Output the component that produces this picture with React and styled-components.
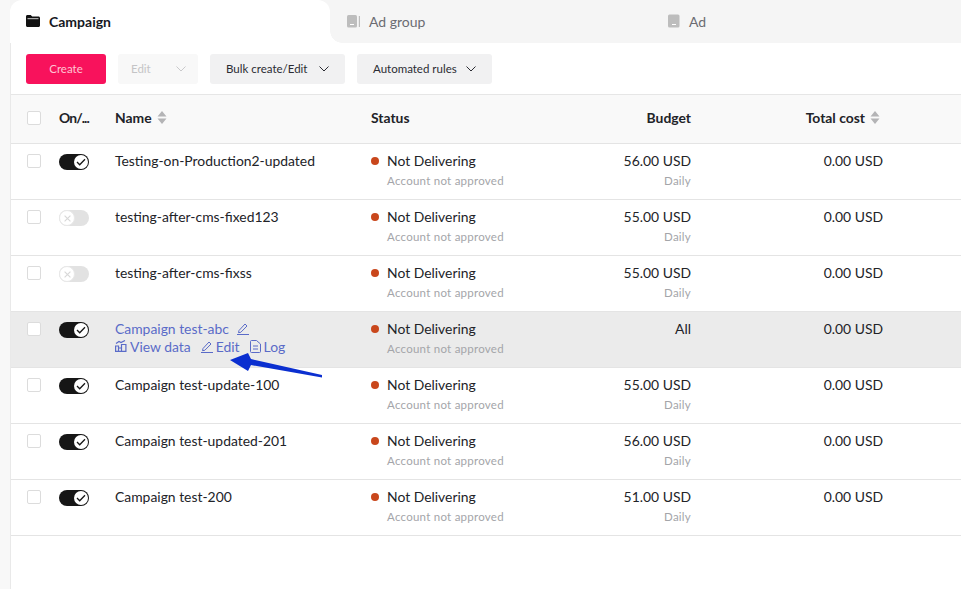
import React from 'react'
import styled, { createGlobalStyle } from 'styled-components'

const GlobalStyle = createGlobalStyle`
  html, body {
    margin: 0;
    padding: 0;
    background: #fff;
  }
  body {
    font-family: "Lato", "Liberation Sans", sans-serif;
    color: #222328;
    overflow: hidden;
  }
`

const Page = styled.div`
  position: relative;
  width: 961px;
  height: 589px;
  overflow: hidden;
  box-sizing: border-box;
  padding-left: 10px;
  background: #f8f8f8;
`
const Panel = styled.div`
  height: 100%;
  background: #fff;
  border-left: 1px solid #e9e9e9;
`
const Tabs = styled.div`
  display: flex;
  height: 43px;
  margin-left: -1px;
  background: #f5f5f5;
`
const Tab = styled.div`
  position: relative;
  display: flex;
  align-items: center;
  gap: 9px;
  box-sizing: border-box;
  width: ${props => props.width}px;
  padding: 0 0 1px ${props => props.pad}px;
  font-size: 14px;
  font-weight: ${props => props.active ? 700 : 400};
  color: ${props => props.active ? '#161823' : '#6b6c72'};
  background: ${props => props.active ? '#fff' : 'transparent'};
  border-radius: ${props => props.active ? '12px 12px 0 0' : '0'};
  ${props => props.active && `
    &::after {
      content: '';
      position: absolute;
      right: -12px;
      bottom: 0;
      width: 12px;
      height: 12px;
      background: radial-gradient(circle at 100% 0, transparent 11.5px, #fff 12px);
    }
  `}
`
const Toolbar = styled.div`
  display: flex;
  align-items: center;
  gap: 12px;
  height: 50px;
  padding: 1px 0 0 15px;
  border-bottom: 1px solid #e6e6e6;
`
const Button = styled.div`
  display: flex;
  align-items: center;
  justify-content: ${props => props.center ? 'center' : 'space-between'};
  box-sizing: border-box;
  width: ${props => props.width}px;
  height: 30px;
  padding: ${props => props.center ? '0 0 1px' : props.disabled ? '0 12px 1px 13px' : '0 16px 1px'};
  border-radius: 3px;
  font-size: 11.5px;
  background: ${props => props.primary ? '#f8125c' : props.disabled ? '#f8f8f8' : '#f1f1f2'};
  color: ${props => props.primary ? '#ffc4d3' : props.disabled ? '#c4c4c6' : '#2b2c33'};
`
const Row = styled.div`
  display: grid;
  grid-template-columns: 48px 56px 256px 190px 130px 192px 1fr;
  box-sizing: border-box;
  height: ${props => props.header ? '49px' : '56px'};
  border-bottom: 1px solid #e4e4e4;
  background: ${props => props.header ? '#f9f9f9' : props.hovered ? '#ebebeb' : '#fff'};
  font-size: 13.9px;
`
const Cell = styled.div`
  padding-top: ${props => props.header ? '14px' : '8px'};
  line-height: 17px;
  text-align: ${props => props.right ? 'right' : 'left'};
  font-weight: ${props => props.header ? 700 : 400};
  white-space: nowrap;
`
const Checkbox = styled.div`
  box-sizing: border-box;
  width: 14px;
  height: 14px;
  margin: 2px 0 0 16px;
  background: #fff;
  border: 1px solid #dcdcdc;
  border-radius: 2px;
`
const Track = styled.div`
  position: relative;
  width: 30px;
  height: 16px;
  margin-top: 2px;
  border-radius: 8px;
  background: ${props => props.on ? '#161616' : '#e2e2e2'};
`
const Knob = styled.div`
  position: absolute;
  top: ${props => props.on ? '1px' : '0'};
  left: ${props => props.on ? '15px' : '0'};
  display: flex;
  align-items: center;
  justify-content: center;
  width: ${props => props.on ? '14px' : '16px'};
  height: ${props => props.on ? '14px' : '16px'};
  border-radius: 50%;
  background: #fff;
  border: ${props => props.on ? 'none' : '1px solid #e8e8e8'};
  box-sizing: border-box;
`
const HeaderLabel = styled.span`
  display: inline-flex;
  align-items: center;
  gap: 5px;
  padding-right: ${props => props.inset || 0}px;
`
const ClippedLabel = styled.span`
  letter-spacing: -0.9px;
`
const StatusLine = styled.div`
  display: flex;
  align-items: center;
  gap: 8px;
`
const Dot = styled.span`
  width: 8px;
  height: 8px;
  border-radius: 50%;
  background: #c9471c;
`
const SubText = styled.div`
  margin: 3px 0 0 ${props => props.indent ? '16px' : '0'};
  font-size: 11.5px;
  line-height: 17px;
  color: #a4a5a9;
  letter-spacing: 0.25px;
`
const LinkLine = styled.div`
  display: flex;
  align-items: center;
  gap: ${props => props.gap || 4}px;
  color: #5a6bc8;
  height: 18px;
  &:first-child {
    margin-top: -1px;
  }
`
const LinkItem = styled.span`
  display: inline-flex;
  align-items: center;
  gap: 3px;
`
const ArrowOverlay = styled.svg`
  position: absolute;
  left: 220px;
  top: 340px;
  width: 110px;
  height: 50px;
`

const rows = [
  { name: 'Testing-on-Production2-updated', on: true, budget: '56.00 USD', period: 'Daily' },
  { name: 'testing-after-cms-fixed123', on: false, budget: '55.00 USD', period: 'Daily' },
  { name: 'testing-after-cms-fixss', on: false, budget: '55.00 USD', period: 'Daily' },
  { name: 'Campaign test-abc', on: true, budget: 'All', hovered: true },
  { name: 'Campaign test-update-100', on: true, budget: '55.00 USD', period: 'Daily' },
  { name: 'Campaign test-updated-201', on: true, budget: '56.00 USD', period: 'Daily' },
  { name: 'Campaign test-200', on: true, budget: '51.00 USD', period: 'Daily' },
]

const Chevron = ({ color = '#2b2c33' }) => (
  <svg width="10" height="6" viewBox="0 0 10 6" fill="none">
    <path d="M.5.500L5 5l4.500-4.500" stroke={color} strokeWidth="1" />
  </svg>
)

const SortIcon = () => (
  <svg width="10" height="13" viewBox="0 0 10 13" fill="#b4b4b6">
    <path d="M5 0l4.500 5.500H.5zM5 13L.5 7.500h9z" />
  </svg>
)

const FolderIcon = () => (
  <svg width="14" height="14" viewBox="0 0 14 14" fill="#111">
    <path d="M0 2.500C0 1.700.6 1 1.400 1h3.300l1.500 1.500h6.300c.8 0 1.500.7 1.500 1.500v7.500c0 .9-.7 1.500-1.500 1.500H1.500C.7 13 0 12.400 0 11.500z" />
    <path d="M1.500 4.700h11" stroke="#fff" strokeWidth=".8" />
  </svg>
)

const AdGroupIcon = () => (
  <svg width="13" height="14" viewBox="0 0 13 14">
    <rect x="0" y="1" width="10" height="12.500" rx="1.500" fill="#bdbdbd" />
    <rect x="3" y="10" width="4" height="1" fill="#fff" />
    <rect x="11.800" y="2" width="1.200" height="11" fill="#bdbdbd" />
  </svg>
)

const AdIcon = () => (
  <svg width="12" height="14" viewBox="0 0 12 14">
    <rect x="0" y="0.500" width="11.500" height="13" rx="1.500" fill="#bdbdbd" />
    <rect x="4" y="10" width="4" height="1" fill="#fff" />
  </svg>
)

const Check = () => (
  <svg width="10" height="8" viewBox="0 0 10 8" fill="none">
    <path d="M1 4l2.700 2.700L9 1.200" stroke="#161616" strokeWidth="1.300" />
  </svg>
)

const Cross = () => (
  <svg width="7" height="7" viewBox="0 0 6 6" fill="none">
    <path d="M.5.500l5 5M5.500.500l-5 5" stroke="#d8d8d8" strokeWidth="1" />
  </svg>
)

const Pencil = () => (
  <svg width="12" height="13" viewBox="0 0 12 13" fill="none" stroke="#5a6bc8" strokeWidth="1">
    <path d="M2 8.500L8 2l2 2-6.200 6.300L1.500 10.700z" />
    <path d="M0 12.500h12" />
  </svg>
)

const ChartIcon = () => (
  <svg width="12" height="12" viewBox="0 0 12 12" fill="none" stroke="#5a6bc8" strokeWidth="1.200">
    <path d="M.6 6h2.900v5.400H.6zM3.500 8h3v3.400h-3zM6.500 4.500h4.400v6.900H6.500z" />
    <path d="M1 3.500l3-2 2 1 4-2" />
  </svg>
)

const LogIcon = () => (
  <svg width="11" height="13" viewBox="0 0 11 13" fill="none" stroke="#5a6bc8" strokeWidth="1">
    <path d="M.5 1.500a1 1 0 011-1h5l4 3.500v7.500a1 1 0 01-1 1h-8a1 1 0 01-1-1z" />
    <path d="M3 6h5M3 9h5" />
  </svg>
)

function Toggle({ on }) {
  return (
    <Track on={on ? 1 : 0}>
      <Knob on={on ? 1 : 0}>{on ? <Check /> : <Cross />}</Knob>
    </Track>
  )
}

export default function App() {
  return (
    <Page>
      <GlobalStyle />
      <Panel>
        <Tabs>
          <Tab active={1} width={320} pad={16}><FolderIcon />Campaign</Tab>
          <Tab width={320} pad={17}><AdGroupIcon />Ad group</Tab>
          <Tab width={310} pad={18}><AdIcon />Ad</Tab>
        </Tabs>
        <Toolbar>
          <Button primary={1} center={1} width={80}>Create</Button>
          <Button disabled width={80}>Edit<Chevron color="#c9c9cb" /></Button>
          <Button width={135}>Bulk create/Edit<Chevron /></Button>
          <Button width={135}>Automated rules<Chevron /></Button>
        </Toolbar>
        <Row header={1}>
          <Cell header={1}><Checkbox /></Cell>
          <Cell header={1}><ClippedLabel>On/...</ClippedLabel></Cell>
          <Cell header={1}><HeaderLabel>Name<SortIcon /></HeaderLabel></Cell>
          <Cell header={1}>Status</Cell>
          <Cell header={1} right={1}>Budget</Cell>
          <Cell header={1} right={1}><HeaderLabel inset={3}>Total cost<SortIcon /></HeaderLabel></Cell>
          <Cell />
        </Row>
        {rows.map(row => (
          <Row key={row.name} hovered={row.hovered}>
            <Cell><Checkbox /></Cell>
            <Cell><Toggle on={row.on} /></Cell>
            <Cell>
              {row.hovered ? (
                <>
                  <LinkLine gap={8}>{row.name}<Pencil /></LinkLine>
                  <LinkLine gap={10}>
                    <LinkItem><ChartIcon />View data</LinkItem>
                    <LinkItem><Pencil />Edit</LinkItem>
                    <LinkItem><LogIcon />Log</LinkItem>
                  </LinkLine>
                </>
              ) : row.name}
            </Cell>
            <Cell>
              <StatusLine><Dot />Not Delivering</StatusLine>
              <SubText indent={1}>Account not approved</SubText>
            </Cell>
            <Cell right={1}>
              {row.budget}
              {row.period && <SubText>{row.period}</SubText>}
            </Cell>
            <Cell right={1}>0.00 USD</Cell>
            <Cell />
          </Row>
        ))}
      </Panel>
      <ArrowOverlay viewBox="0 0 110 50">
        <path d="M102 35L102 37.500L31 25L28 31L10 20L28 13L31 19Z" fill="#0b2fd0" />
      </ArrowOverlay>
    </Page>
  )
}
